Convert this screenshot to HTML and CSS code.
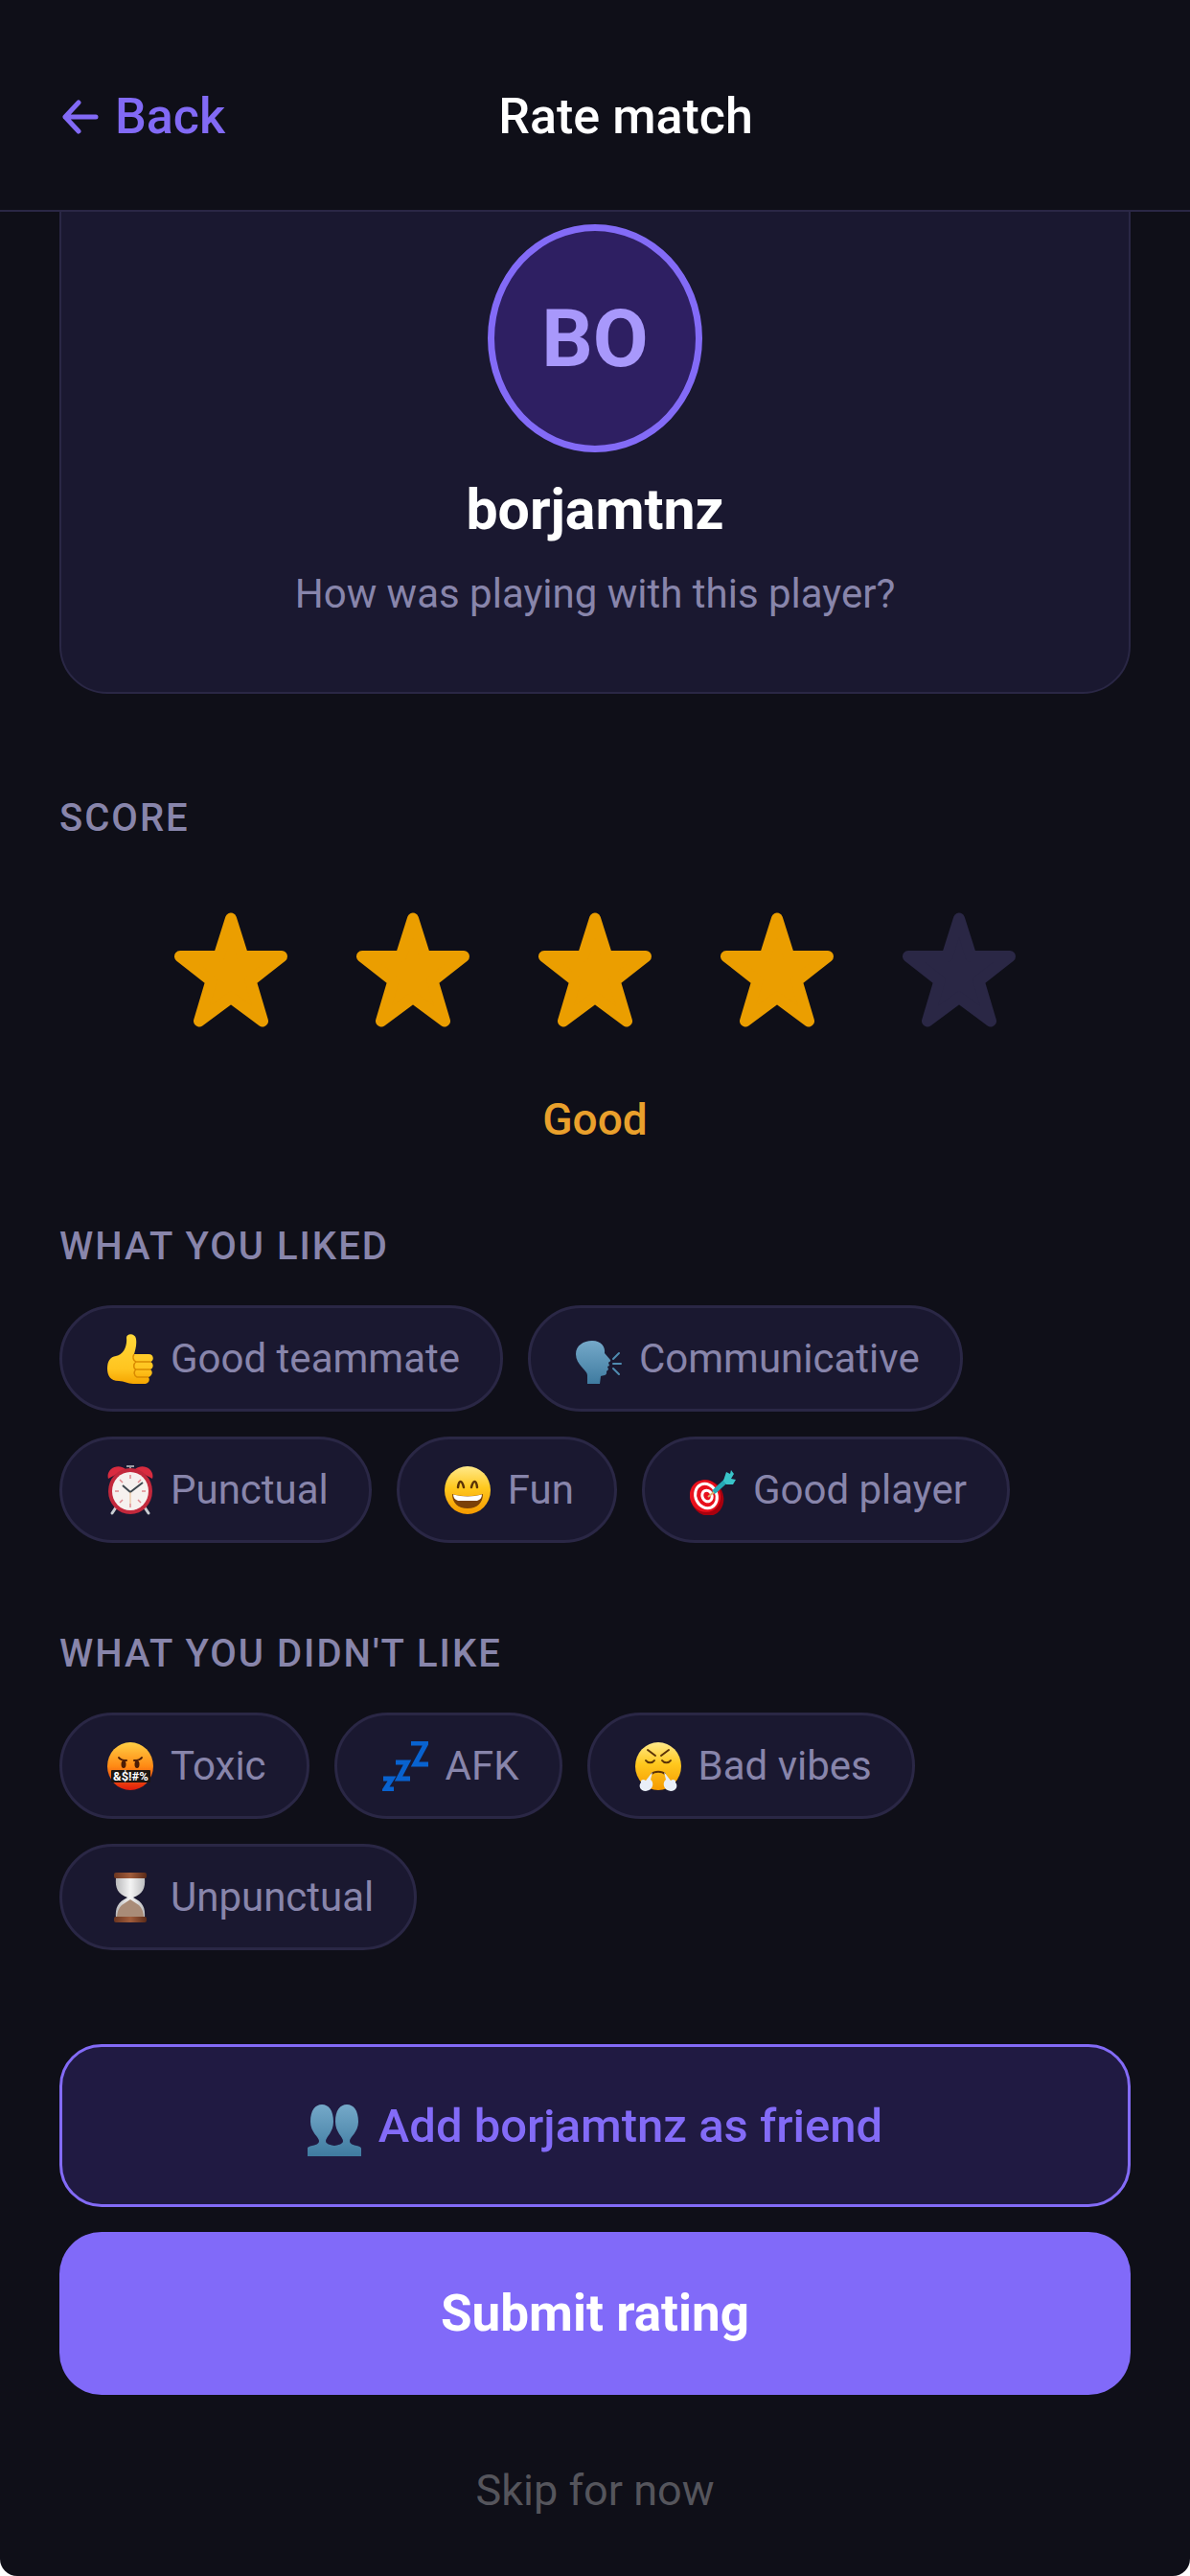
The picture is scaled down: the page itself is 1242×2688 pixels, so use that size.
FILE: index.html
```html
<!DOCTYPE html>
<html lang="en">
<head>
<meta charset="UTF-8">
<meta name="viewport" content="width=device-width, initial-scale=1.0">
<title>Rate match</title>
<link rel="stylesheet" href="styles.css">
</head>
<body>
<!-- shared star shape and emoji gradients -->
<svg class="defs" aria-hidden="true">
    <defs>
        <linearGradient id="face" x1="0" y1="0" x2="0" y2="1">
            <stop offset="0" stop-color="#ffe98a"/>
            <stop offset=".45" stop-color="#ffc81e"/>
            <stop offset="1" stop-color="#f59a00"/>
        </linearGradient>
        <linearGradient id="rage" x1="0" y1="0" x2="0" y2="1">
            <stop offset="0" stop-color="#ffcf45"/>
            <stop offset=".5" stop-color="#ff8a14"/>
            <stop offset="1" stop-color="#e01c0c"/>
        </linearGradient>
        <linearGradient id="blue" x1="0" y1="0" x2="0" y2="1">
            <stop offset="0" stop-color="#75a9c9"/>
            <stop offset="1" stop-color="#3f7ba0"/>
        </linearGradient>
        <linearGradient id="thumb" x1="0" y1="0" x2="0" y2="1">
            <stop offset="0" stop-color="#ffd83a"/>
            <stop offset=".7" stop-color="#ffc41f"/>
            <stop offset="1" stop-color="#f5a500"/>
        </linearGradient>
        <linearGradient id="glass" x1="0" y1="0" x2="1" y2="0">
            <stop offset="0" stop-color="#b9b9bb"/>
            <stop offset=".5" stop-color="#f4f4f4"/>
            <stop offset="1" stop-color="#bdbdbf"/>
        </linearGradient>
        <linearGradient id="wood" x1="0" y1="0" x2="1" y2="0">
            <stop offset="0" stop-color="#6b3520"/>
            <stop offset=".5" stop-color="#a15d3c"/>
            <stop offset="1" stop-color="#5a2a18"/>
        </linearGradient>
        <symbol id="star" viewBox="0 0 118 120">
            <path d="M59 6.500L71.500 46H112L79.500 71.500L92 113.500L59 89L26 113.500L38.500 71.500L6 46H46.500Z" fill="currentColor" stroke="currentColor" stroke-width="12" stroke-linejoin="round"/>
        </symbol>
    </defs>
</svg>

<div class="app">
    <header class="header">
        <button class="back" type="button">
            <svg class="arrow" viewBox="0 0 42 36" aria-hidden="true">
                <path d="M20 3L6 18L20 33M6 18H38" fill="none" stroke="currentColor" stroke-width="5" stroke-linecap="round" stroke-linejoin="round"/>
            </svg>
            Back
        </button>
        <h1 class="title">Rate match</h1>
        <div class="header-spacer"></div>
    </header>

    <main class="content">
        <section class="card">
            <div class="avatar">BO</div>
            <h2 class="player">borjamtnz</h2>
            <p class="question">How was playing with this player?</p>
        </section>

        <section class="score">
            <h3 class="label">SCORE</h3>
            <div class="stars">
                <button class="star" type="button" aria-label="1 star"><svg><use href="#star"/></svg></button>
                <button class="star" type="button" aria-label="2 stars"><svg><use href="#star"/></svg></button>
                <button class="star" type="button" aria-label="3 stars"><svg><use href="#star"/></svg></button>
                <button class="star" type="button" aria-label="4 stars"><svg><use href="#star"/></svg></button>
                <button class="star off" type="button" aria-label="5 stars"><svg><use href="#star"/></svg></button>
            </div>
            <p class="score-text">Good</p>
        </section>

        <div class="tag-groups">
            <section>
                <h3 class="label">WHAT YOU LIKED</h3>
                <div class="chips">
                    <button class="chip" type="button">
                        <svg class="emoji" viewBox="0 0 48 52" aria-hidden="true">
                            <path d="M20 4C20-1 29-1 30 5C31 12 29 17 28 21H43C49 21 49 28 45 29C49 31 48 36 45 37C48 39 47 44 43 45C45 48 43 52 39 52H27C21 52 18 49 12 49C3 49 0 43 0 36C0 28 3 24 9 23C17 22 21 12 20 4Z" fill="url(#thumb)"/>
                            <path d="M28 21C26 24 27 28 30 29H45M30 29C27 31 27 36 30 37H45M30 37C27 39 28 44 31 45H43" fill="none" stroke="#d98a00" stroke-width="1.500"/>
                        </svg>
                        Good teammate
                    </button>
                    <button class="chip" type="button">
                        <svg class="emoji" viewBox="0 0 48 52" aria-hidden="true">
                            <path d="M12 52V43C12 38 0 32 0 21C0 12 8 7 17 7C27 7 31 14 30 20L36 27C37 29 34 29 34 30L35 33L33 34L34 37L32 39C33 44 28 43 26 44L25 52Z" fill="url(#blue)"/>
                            <path d="M39 26L45 20M39 31H47M39 36L45 42" stroke="#4f8bb0" stroke-width="2" stroke-linecap="round"/>
                        </svg>
                        Communicative
                    </button>
                    <button class="chip" type="button">
                        <svg class="emoji" viewBox="0 0 48 52" aria-hidden="true">
                            <path d="M9 44L5 50M39 44L43 50" stroke="#c9cdd2" stroke-width="3" stroke-linecap="round"/>
                            <path d="M24 5V0M20 1H28" stroke="#9a9da3" stroke-width="2"/>
                            <path d="M1 14C-2 4 11-3 19 4ZM47 14C50 4 37-3 29 4Z" fill="#d92b3f"/>
                            <ellipse cx="24" cy="27" rx="23" ry="24" fill="#c3283c"/>
                            <ellipse cx="24" cy="27" rx="19" ry="20" fill="#f6f1ef"/>
                            <path d="M24 10V14M24 40V44M8 27H12M36 27H40M13 15L16 18M35 39L32 36M13 39L16 36M35 15L32 18" stroke="#e08a90" stroke-width="1.500"/>
                            <path d="M16 21L24 28L37 18" fill="none" stroke="#3d474e" stroke-width="2"/>
                            <path d="M24 28V40" stroke="#e9b98a" stroke-width="1"/>
                        </svg>
                        Punctual
                    </button>
                    <button class="chip" type="button">
                        <svg class="emoji" viewBox="0 0 48 52" aria-hidden="true">
                            <ellipse cx="24" cy="26" rx="24" ry="25" fill="url(#face)"/>
                            <path d="M14 23C15 15 18 15 20 23M28 23C30 15 33 15 34 23" fill="none" stroke="#5b3306" stroke-width="2.500" stroke-linecap="round"/>
                            <path d="M8 30C18 33 30 33 40 30C40 39 34 45 24 45C14 45 8 39 8 30Z" fill="#7a4108"/>
                            <path d="M9 30.500C18 33 30 33 39 30.500C39 34 37 36 34 37H14C11 36 9 34 9 30.500Z" fill="#fff"/>
                        </svg>
                        Fun
                    </button>
                    <button class="chip" type="button">
                        <svg class="emoji" viewBox="0 0 48 52" aria-hidden="true">
                            <ellipse cx="18" cy="34" rx="17" ry="19" fill="#a8000e" transform="rotate(-25 18 34)"/>
                            <ellipse cx="16" cy="32" rx="16" ry="17" fill="#e8101c" transform="rotate(-25 16 32)"/>
                            <ellipse cx="17" cy="32" rx="11" ry="13" fill="none" stroke="#fff" stroke-width="3" transform="rotate(-25 17 32)"/>
                            <ellipse cx="18" cy="32" rx="5" ry="6" fill="none" stroke="#fff" stroke-width="3" transform="rotate(-25 18 32)"/>
                            <path d="M26 27L39 15" stroke="#25a9b5" stroke-width="5" stroke-linecap="round"/>
                            <path d="M19 33L25 28" stroke="#e0b070" stroke-width="2"/>
                            <path d="M35 16L38 7L42 9L43 5L46 9L43 14L48 15L45 20L38 20Z" fill="#39c4c9"/>
                        </svg>
                        Good player
                    </button>
                </div>
            </section>

            <section>
                <h3 class="label">WHAT YOU DIDN'T LIKE</h3>
                <div class="chips">
                    <button class="chip" type="button">
                        <svg class="emoji" viewBox="0 0 48 52" aria-hidden="true">
                            <ellipse cx="24" cy="26" rx="24" ry="25" fill="url(#rage)"/>
                            <path d="M12 17C14 20 17 20 20 20M36 17C34 20 31 20 28 20" fill="none" stroke="#4b1c06" stroke-width="2" stroke-linecap="round"/>
                            <ellipse cx="17" cy="24" rx="2.500" ry="4" fill="#4b1c06"/>
                            <ellipse cx="31" cy="24" rx="2.500" ry="4" fill="#4b1c06"/>
                            <rect x="4" y="30" width="41" height="13" rx="1" fill="#1c1612"/>
                            <text x="24.500" y="41" class="curse">&amp;$!#%</text>
                        </svg>
                        Toxic
                    </button>
                    <button class="chip" type="button">
                        <svg class="emoji" viewBox="0 0 48 52" aria-hidden="true">
                            <path d="M30 2H46L34 24H48M14 22H26L17 39H29M1 39H10L3 50H12" fill="none" stroke="#0862cf" stroke-width="5"/>
                        </svg>
                        AFK
                    </button>
                    <button class="chip" type="button">
                        <svg class="emoji" viewBox="0 0 48 52" aria-hidden="true">
                            <ellipse cx="24" cy="26" rx="24" ry="25" fill="url(#face)"/>
                            <path d="M13 9L21 15M35 9L27 15M11 20C13 23 18 23 20 20M28 20C30 23 35 23 37 20" fill="none" stroke="#5b3306" stroke-width="2" stroke-linecap="round"/>
                            <path d="M17 34C20 31 28 31 31 34" fill="none" stroke="#5b3306" stroke-width="2"/>
                            <path d="M18 32L16 40C20 43 19 51 11 52C5 52 3 46 6 43C5 40 9 39 11 41ZM30 32L32 40C28 43 29 51 37 52C43 52 45 46 42 43C43 40 39 39 37 41Z" fill="#e9eff8"/>
                        </svg>
                        Bad vibes
                    </button>
                    <button class="chip" type="button">
                        <svg class="emoji" viewBox="0 0 48 52" aria-hidden="true">
                            <path d="M9 5H39C40 17 37 22 27 26C37 31 40 36 39 48H9C8 36 11 31 21 26C11 22 8 17 9 5Z" fill="url(#glass)"/>
                            <path d="M24 28L33 34C36 37 38 41 38 48H10C10 41 12 37 15 34Z" fill="#a98c78"/>
                            <rect x="7" y="0" width="34" height="6" rx="2" fill="url(#wood)"/>
                            <rect x="7" y="46" width="34" height="6" rx="2" fill="url(#wood)"/>
                        </svg>
                        Unpunctual
                    </button>
                </div>
            </section>
        </div>

        <div class="actions">
            <button class="btn btn-friend" type="button">
                <svg class="people" viewBox="0 0 56 64" aria-hidden="true">
                    <path id="bust" d="M0 64V56C0 52 12 54 12 48C12 44 3 39 3 28C3 16 8 10 15 10C22 10 27 16 27 28C27 39 19 44 19 48C19 54 34 52 34 56V64Z" fill="url(#blue)"/>
                    <use href="#bust" transform="matrix(-1 0 0 1 56 0)"/>
                </svg>
                Add borjamtnz as friend
            </button>
            <button class="btn btn-submit" type="button">Submit rating</button>
            <button class="skip" type="button">Skip for now</button>
        </div>
    </main>
</div>
</body>
</html>
```

FILE: styles.css
```css
* {
    box-sizing: border-box;
}
body {
    margin: 0;
    background: #fff;
    font-family: Roboto, "Liberation Sans", sans-serif;
    color: #fff;
}
h1, h2, h3, p {
    margin: 0;
}
button {
    margin: 0;
    padding: 0;
    border: none;
    background: none;
    font-family: inherit;
    color: inherit;
    cursor: pointer;
}
svg {
    display: block;
    flex: none;
}
.defs {
    position: absolute;
    width: 0;
    height: 0;
}
.app {
    min-height: 100vh;
    background: #0f0f18;
    border-radius: 0 0 18px 18px;
    overflow: hidden;
}

/* header */
.header {
    position: sticky;
    top: 0;
    z-index: 1;
    display: flex;
    justify-content: space-between;
    align-items: center;
    height: 221px;
    padding: 24px 62px 0;
    background: #0f0f18;
    border-bottom: 2px solid #2a2745;
}
.back {
    display: flex;
    align-items: center;
    gap: 16px;
    font-size: 52px;
    font-weight: 500;
    color: #826af5;
}
.arrow {
    width: 42px;
    height: 36px;
}
.title {
    font-size: 52px;
    font-weight: 500;
}
.header-spacer {
    width: 109px;
}

/* player card, its top is scrolled under the header */
.content {
    padding: 0 62px 40px;
}
.card {
    display: flex;
    flex-direction: column;
    align-items: center;
    margin-top: -60px;
    padding: 71px 50px 76px;
    background: #1a1830;
    border: 2px solid #2a2745;
    border-radius: 50px;
}
.avatar {
    display: flex;
    align-items: center;
    justify-content: center;
    width: 224px;
    height: 238px;
    border: 7px solid #836bf7;
    border-radius: 50%;
    background: #2e1f62;
    color: #a898fb;
    font-size: 84px;
    font-weight: 700;
}
.player {
    margin-top: 26px;
    font-size: 59px;
    line-height: 68px;
    font-weight: 700;
}
.question {
    margin-top: 28px;
    font-size: 42px;
    line-height: 52px;
    color: #8885ab;
}

/* sections */
.label {
    font-size: 40px;
    line-height: 48px;
    font-weight: 500;
    letter-spacing: 2px;
    color: #8885ab;
}
.score {
    margin-top: 106px;
}
.stars {
    display: flex;
    justify-content: center;
    gap: 72px;
    margin-top: 74px;
}
.star {
    color: #eb9e00;
}
.star svg {
    width: 118px;
    height: 120px;
}
.star.off {
    color: #2a2745;
}
.score-text {
    margin-top: 70px;
    font-size: 46px;
    line-height: 52px;
    font-weight: 500;
    text-align: center;
    color: #e9a02c;
}
.tag-groups {
    display: flex;
    flex-direction: column;
    gap: 92px;
    margin-top: 83px;
}
.chips {
    display: flex;
    flex-wrap: wrap;
    gap: 26px;
    margin-top: 37px;
}
.chip {
    display: flex;
    align-items: center;
    gap: 18px;
    height: 111px;
    padding: 0 42px 0 47px;
    border: 3px solid #2a2745;
    border-radius: 56px;
    background: #1a1830;
    font-size: 42px;
    color: #8885ab;
}
.emoji {
    width: 48px;
    height: 52px;
}
.curse {
    font-size: 13px;
    font-weight: 700;
    text-anchor: middle;
    fill: #fff;
}

/* actions */
.actions {
    display: flex;
    flex-direction: column;
    gap: 26px;
    margin-top: 98px;
}
.btn {
    display: flex;
    align-items: center;
    justify-content: center;
    gap: 18px;
    height: 170px;
    border-radius: 44px;
}
.btn-friend {
    border: 3px solid #836bf7;
    background: #201a42;
    font-size: 49px;
    font-weight: 500;
    color: #836bf7;
}
.people {
    width: 56px;
    height: 64px;
}
.btn-submit {
    background: #816af9;
    font-size: 53px;
    font-weight: 700;
    color: #fff;
}
.skip {
    margin-top: 46px;
    font-size: 45px;
    line-height: 56px;
    color: #55555c;
}
```
